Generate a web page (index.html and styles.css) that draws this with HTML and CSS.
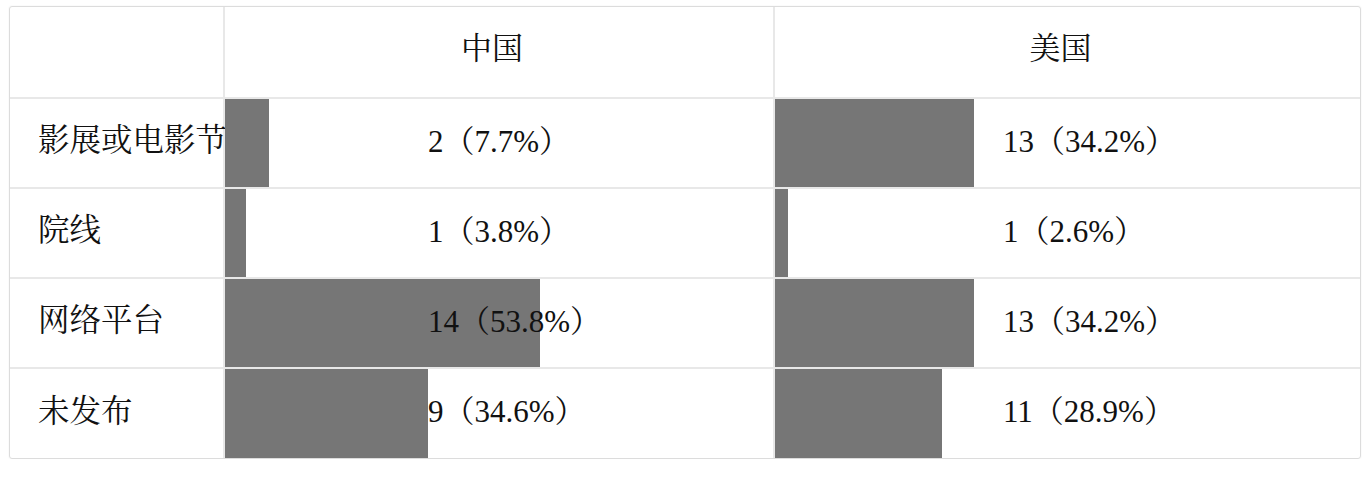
FILE: index.html
```html
<!DOCTYPE html>
<html lang="zh-CN">
<head>
<meta charset="utf-8">
<title>发布渠道对比</title>
<link rel="stylesheet" href="styles.css">
</head>
<body>
<div class="table">
  <div class="cell head corner"></div>
  <div class="cell head">中国</div>
  <div class="cell head last">美国</div>

  <div class="cell label">影展或电影节</div>
  <div class="cell val cn" style="--w:44px">2（7.7%）</div>
  <div class="cell val us last" style="--w:199px">13（34.2%）</div>

  <div class="cell label">院线</div>
  <div class="cell val cn" style="--w:21px">1（3.8%）</div>
  <div class="cell val us last" style="--w:13px">1（2.6%）</div>

  <div class="cell label">网络平台</div>
  <div class="cell val cn" style="--w:315px">14（53.8%）</div>
  <div class="cell val us last" style="--w:199px">13（34.2%）</div>

  <div class="cell label bottom">未发布</div>
  <div class="cell val cn bottom" style="--w:203px">9（34.6%）</div>
  <div class="cell val us last bottom" style="--w:167px">11（28.9%）</div>
</div>
</body>
</html>
```

FILE: styles.css
```css
html, body {
  margin: 0;
  background: #ffffff;
}

body {
  padding: 6px 0 0 9px;
  font-family: "Liberation Serif", "Noto Serif CJK SC", "Noto Sans CJK SC", serif;
  font-size: 31px;
  color: #111111;
}

.table {
  box-sizing: border-box;
  width: 1352px;
  display: grid;
  grid-template-columns: 215px 550px 585px;
  grid-template-rows: 92px 90px 90px 90px 89px;
  border: 1px solid #dcdcdc;
  border-radius: 3px;
  box-shadow: 0 0 2px rgba(0, 0, 0, 0.07);
}

.cell {
  box-sizing: border-box;
  display: flex;
  align-items: center;
  border-right: 2px solid #e8e8e8;
  border-bottom: 2px solid #e8e8e8;
  white-space: nowrap;
  line-height: 1;
}

.cell.last {
  border-right: none;
}

.cell.bottom {
  border-bottom: none;
}

.head {
  justify-content: center;
  padding-bottom: 8px;
  padding-right: 14px;
}

.label {
  padding-left: 28px;
  padding-bottom: 4px;
  font-size: 31.5px;
}

.val {
  padding-bottom: 4px;
  background-image: linear-gradient(#767676, #767676);
  background-repeat: no-repeat;
  background-size: var(--w) 100%;
  background-position: left top;
}

.val.cn {
  padding-left: 203px;
}

.val.us {
  padding-left: 228px;
}
```
